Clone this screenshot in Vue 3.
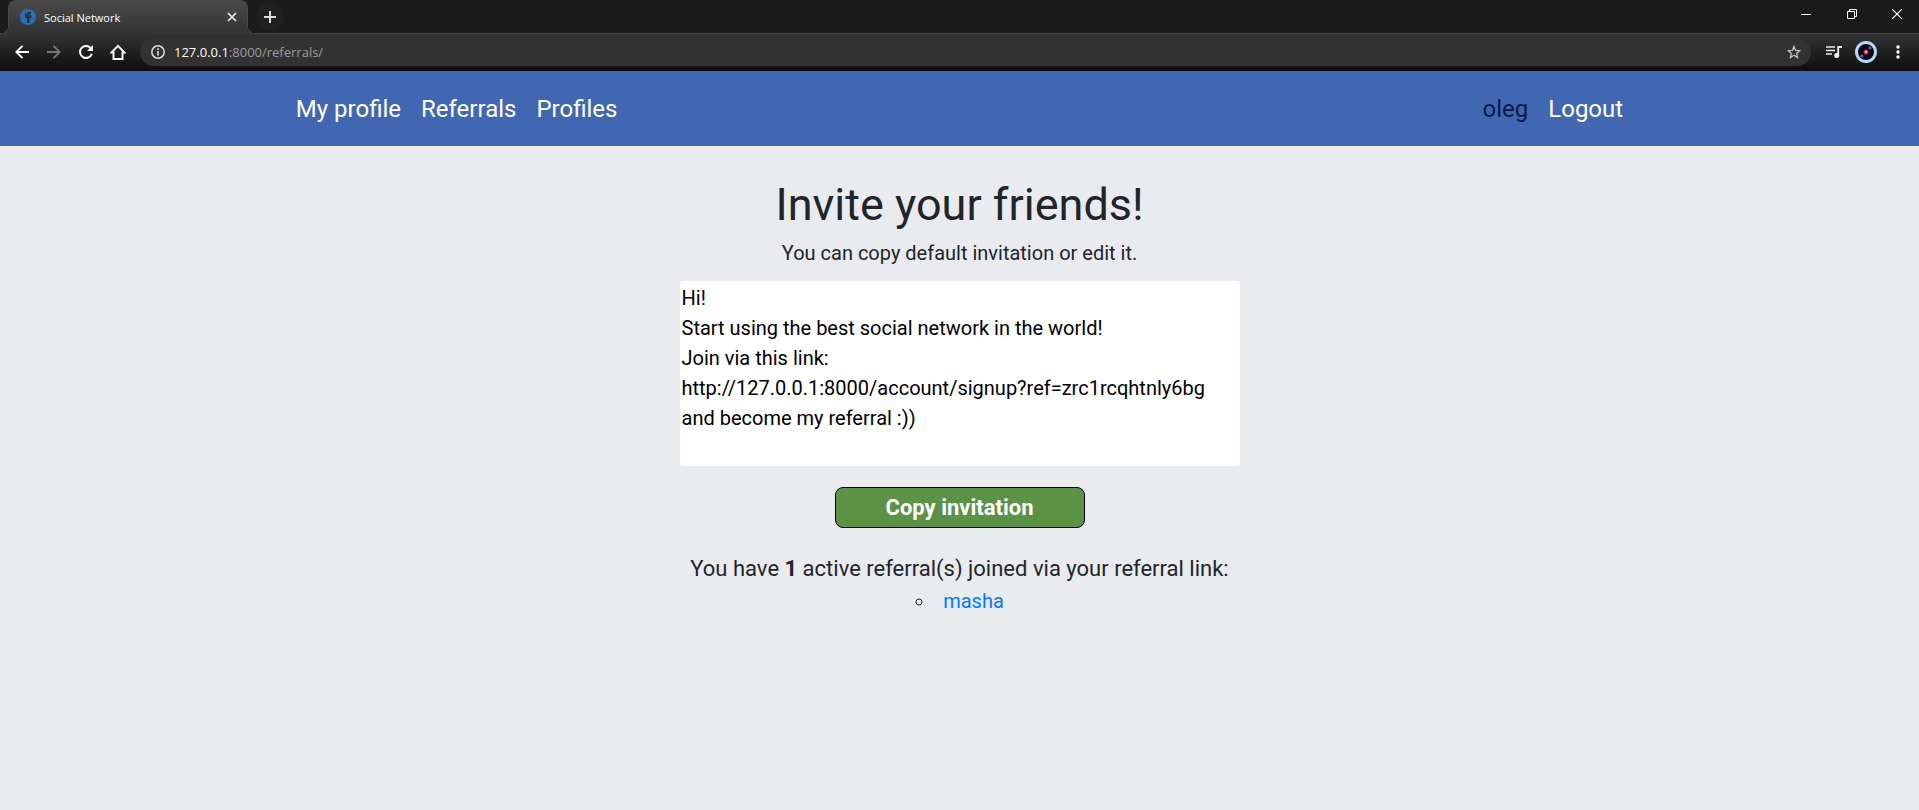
<script setup>
import { ref } from 'vue'

const invitation = ref(`Hi!
Start using the best social network in the world!
Join via this link:
http://127.0.0.1:8000/account/signup?ref=zrc1rcqhtnly6bg
and become my referral :))
`)
const referrals = ['masha']
const mainLinks = ['My profile', 'Referrals', 'Profiles']
</script>

<template>
  <div class="window">
    <header class="browser">
      <div class="tabstrip">
        <div class="tab">
          <svg class="favicon" width="16" height="16" viewBox="0 0 16 16">
            <circle cx="8" cy="8" r="8" fill="#2d6cb5" />
            <path d="M7 14V9H5V4h1.500v2H7V5Q7 3 9 3h2v2H9.500v1.500h2V9h-2v5Z" fill="#2f3338" />
          </svg>
          <span class="tab-title">Social Network</span>
          <button class="icon tab-close" aria-label="Close tab">
            <svg width="10" height="10" viewBox="0 0 10 10"><path d="M1 1l8 8M9 1l-8 8" stroke="#eee" stroke-width="1.700" /></svg>
          </button>
        </div>
        <button class="icon new-tab" aria-label="New tab">
          <svg width="12" height="12" viewBox="0 0 12 12"><path d="M6 0v12M0 6h12" stroke="#ddd" stroke-width="2" /></svg>
        </button>
        <div class="window-controls">
          <button class="icon" aria-label="Minimize">
            <svg width="10" height="10" viewBox="0 0 10 10"><path d="M0 5.500h10" stroke="#fff" /></svg>
          </button>
          <button class="icon" aria-label="Restore">
            <svg width="10" height="10" viewBox="0 0 10 10" fill="none" stroke="#fff"><path d="M.5 2.500h7v7h-7zM2.500 2.500v-2h7v7h-2" /></svg>
          </button>
          <button class="icon" aria-label="Close window">
            <svg width="10" height="10" viewBox="0 0 10 10"><path d="M0 0l10 10M10 0L0 10" stroke="#fff" stroke-width="1.200" /></svg>
          </button>
        </div>
      </div>
      <div class="toolbar">
        <button class="icon tool" aria-label="Back">
          <svg width="14" height="14" viewBox="0 0 14 14" fill="none" stroke="#fff" stroke-width="1.900"><path d="M14 7H1.500M7.500 .8L1.300 7l6.200 6.200" /></svg>
        </button>
        <button class="icon tool" aria-label="Forward">
          <svg width="14" height="14" viewBox="0 0 14 14" fill="none" stroke="#777" stroke-width="1.900"><path d="M0 7h12.500M6.500 .8L12.700 7l-6.200 6.200" /></svg>
        </button>
        <button class="icon tool" aria-label="Reload">
          <svg width="14" height="14" viewBox="0 0 14 14"><path d="M11.600 3A6 6 0 1 0 12.800 8.800" fill="none" stroke="#fff" stroke-width="2" /><path d="M14 0v6H8Z" fill="#fff" /></svg>
        </button>
        <button class="icon tool" aria-label="Home">
          <svg width="16" height="16" viewBox="0 0 16 16"><path d="M1.500 8.500L8 1.800l6.500 6.700H12.500V15h-9V8.500Z" fill="none" stroke="#fff" stroke-width="1.900" /></svg>
        </button>
        <div class="omnibox">
          <svg width="14" height="14" viewBox="0 0 14 14"><circle cx="7" cy="7" r="6.200" fill="none" stroke="#ddd" stroke-width="1.500" /><path d="M7 6v4.500M7 3.300v1.600" stroke="#ddd" stroke-width="1.600" /></svg>
          <a class="address" href="#"><span class="host">127.0.0.1</span>:8000/referrals/</a>
          <button class="icon" aria-label="Bookmark this page">
            <svg width="14" height="14" viewBox="0 0 14 14"><path d="M7 1.500l1.600 3.900 4.200.3-3.200 2.700 1 4.100L7 10.300l-3.600 2.200 1-4.100L1.200 5.700l4.200-.3Z" fill="none" stroke="#c4c4c4" stroke-width="1.300" /></svg>
          </button>
        </div>
        <button class="icon tool" aria-label="Media controls">
          <svg width="16" height="14" viewBox="0 0 16 14"><path d="M0 2h9M0 5.500h9M0 9h6" stroke="#eee" stroke-width="1.700" /><path d="M12.200 10.500V2H16" fill="none" stroke="#eee" stroke-width="1.800" /><circle cx="10.700" cy="10.500" r="2.500" fill="#eee" /></svg>
        </button>
        <button class="icon tool" aria-label="Profile">
          <svg width="22" height="22" viewBox="0 0 22 22">
            <circle cx="11" cy="11" r="9.500" fill="#09091b" stroke="#b4d8f5" stroke-width="3" />
            <path d="M14 6l2 2M6 14l2 2" stroke="#5f6678" stroke-width="2.500" />
            <circle cx="11" cy="11" r="2.500" fill="#c02b63" /><circle cx="11" cy="11" r="1.200" fill="#ffb16b" />
          </svg>
        </button>
        <button class="icon tool" aria-label="Menu">
          <svg width="4" height="14" viewBox="0 0 4 14" fill="#fff"><circle cx="2" cy="2" r="1.700" /><circle cx="2" cy="7" r="1.700" /><circle cx="2" cy="12" r="1.700" /></svg>
        </button>
      </div>
    </header>

    <nav class="navbar">
      <div class="nav-inner">
        <div class="links">
          <a v-for="link in mainLinks" :key="link" href="#">{{ link }}</a>
        </div>
        <div class="links">
          <span class="user">oleg</span>
          <a href="#">Logout</a>
        </div>
      </div>
    </nav>

    <main>
      <h1>Invite your friends!</h1>
      <label class="hint" for="invitation">You can copy default invitation or edit it.</label>
      <textarea id="invitation" v-model="invitation" spellcheck="false"></textarea>
      <button class="copy">Copy invitation</button>
      <p class="summary">You have <b>1</b> active referral(s) joined via your referral link:</p>
      <ul>
        <li v-for="name in referrals" :key="name"><a href="#">{{ name }}</a></li>
      </ul>
    </main>
  </div>
</template>

<style>
body {
  margin: 0;
  background: #e9ebee;
}
</style>

<style scoped>
.window {
  display: flex;
  flex-direction: column;
  min-height: 100vh;
  font-family: Roboto, sans-serif;
  color: #212529;
  background: #e9ebee;
}
.icon {
  display: flex;
  align-items: center;
  justify-content: center;
  padding: 0;
  border: 0;
  background: none;
}
.browser {
  font-family: "Open Sans", "Noto Sans", sans-serif;
}
.tabstrip {
  display: flex;
  height: 33px;
  padding-left: 8px;
  background: #1b1b1b;
  border-bottom: 1px solid #4a4a4a;
}
.tab {
  position: relative;
  display: flex;
  align-items: center;
  box-sizing: border-box;
  width: 240px;
  height: 34px;
  padding: 0 10px 0 11px;
  border: 1px solid #4a4a4a;
  border-top: 0;
  border-bottom: 0;
  border-radius: 8px 8px 0 0;
  background: linear-gradient(#4a4a4a, #333);
}
.tab::before,
.tab::after {
  content: "";
  position: absolute;
  bottom: 0;
  width: 8px;
  height: 8px;
}
.tab::before {
  right: 100%;
  background: radial-gradient(circle at 0 0, transparent 7px, #4a4a4a 7px, #333 8px);
}
.tab::after {
  left: 100%;
  background: radial-gradient(circle at 100% 0, transparent 7px, #4a4a4a 7px, #333 8px);
}
.tab-title {
  flex: 1;
  margin-left: 8px;
  font-size: 11px;
  color: #fff;
}
.new-tab {
  width: 28px;
  height: 28px;
  margin: 3px 0 0 8px;
  border-radius: 50%;
  background: #202020;
}
.window-controls {
  display: flex;
  height: 28px;
  margin-left: auto;
}
.window-controls .icon {
  width: 46px;
}
.window-controls .icon:last-child {
  width: 44px;
}
.toolbar {
  display: flex;
  align-items: center;
  box-sizing: border-box;
  height: 37px;
  padding: 0 5px 2px 6px;
  background: linear-gradient(#333, #0d0d0d);
}
.tool {
  width: 32px;
  height: 28px;
}
.omnibox {
  display: flex;
  flex: 1;
  align-items: center;
  gap: 9px;
  height: 28px;
  margin: 0 7px 0 6px;
  padding: 0 10px 0 11px;
  border-radius: 14px;
  background: #323232;
}
.address {
  flex: 1;
  font-size: 13px;
  color: #9b9b9b;
  text-decoration: none;
}
.host {
  color: #fff;
}
.navbar {
  display: flex;
  justify-content: center;
  height: 75px;
  background: #4267b2;
}
.nav-inner {
  display: flex;
  align-items: center;
  justify-content: space-between;
  box-sizing: border-box;
  width: 70%;
  padding: 0 8px;
}
.links {
  display: flex;
  gap: 20px;
  font-size: 24px;
  line-height: 36px;
}
.links a {
  color: #fff;
  text-decoration: none;
}
.user {
  color: #081a4b;
}
main {
  display: flex;
  flex-direction: column;
  align-items: center;
  padding-top: 32px;
}
h1 {
  margin: 0;
  font-size: 45px;
  font-weight: 400;
  line-height: 54px;
}
.hint {
  margin-top: 6px;
  font-size: 20px;
  line-height: 30px;
}
textarea {
  box-sizing: border-box;
  width: 560px;
  height: 185px;
  margin-top: 13px;
  padding: 2px;
  border: 0;
  border-radius: 3px;
  outline: 0;
  resize: none;
  overflow: auto;
  font: 400 20px/30px Roboto, sans-serif;
  color: #000;
  background: #fff;
}
.copy {
  width: 250px;
  height: 41px;
  margin-top: 21px;
  padding: 0;
  border: 1px solid #000;
  border-radius: 8px;
  font: 700 22px/33px Roboto, sans-serif;
  color: #fff;
  background: #5b9246;
}
.summary {
  margin: 24px 0 0;
  font-size: 22px;
  line-height: 34px;
}
ul {
  margin: 0;
  padding-left: 20px;
  list-style: circle;
  font-size: 20px;
  line-height: 30px;
}
li {
  padding-left: 8px;
}
li a {
  color: #007bff;
  text-decoration: none;
}
</style>
